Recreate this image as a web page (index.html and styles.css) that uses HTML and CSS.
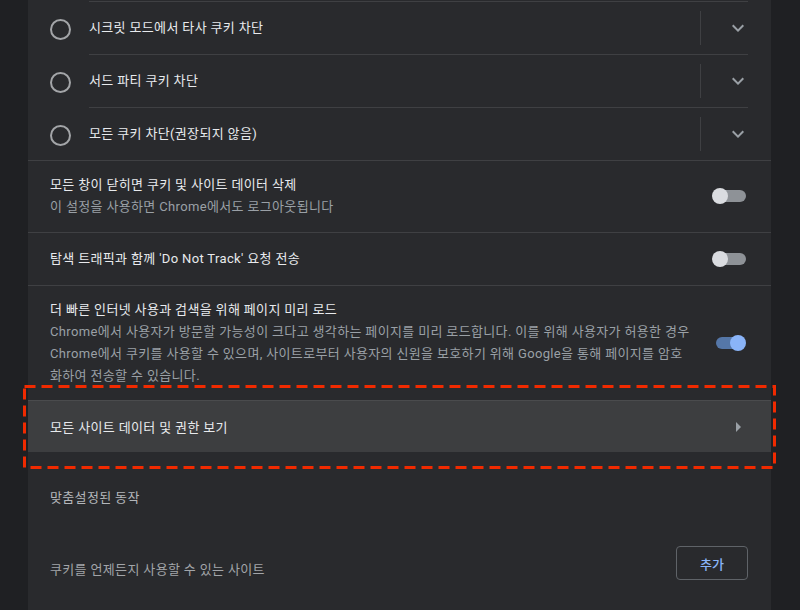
FILE: index.html
```html
<!DOCTYPE html>
<html lang="ko">
<head>
<meta charset="utf-8">
<title>쿠키 설정</title>
<link rel="stylesheet" href="styles.css">
</head>
<body>
<main class="card">
  <div class="radio-list">
    <div class="radio-row">
      <span class="radio"></span>
      <div class="radio-body">
        <span class="label">시크릿 모드에서 타사 쿠키 차단</span>
        <span class="vsep"></span>
        <svg class="icon" viewBox="0 0 24 24"><path d="M16.59 8.59L12 13.17 7.41 8.59 6 10l6 6 6-6z"/></svg>
      </div>
    </div>
    <div class="radio-row">
      <span class="radio"></span>
      <div class="radio-body">
        <span class="label">서드 파티 쿠키 차단</span>
        <span class="vsep"></span>
        <svg class="icon" viewBox="0 0 24 24"><path d="M16.59 8.59L12 13.17 7.41 8.59 6 10l6 6 6-6z"/></svg>
      </div>
    </div>
    <div class="radio-row">
      <span class="radio"></span>
      <div class="radio-body">
        <span class="label">모든 쿠키 차단(권장되지 않음)</span>
        <span class="vsep"></span>
        <svg class="icon" viewBox="0 0 24 24"><path d="M16.59 8.59L12 13.17 7.41 8.59 6 10l6 6 6-6z"/></svg>
      </div>
    </div>
  </div>

  <div class="toggle-row two-line">
    <div class="text">
      <div class="label">모든 창이 닫히면 쿠키 및 사이트 데이터 삭제</div>
      <div class="sub">이 설정을 사용하면 Chrome에서도 로그아웃됩니다</div>
    </div>
    <span class="toggle"><span class="knob"></span></span>
  </div>

  <div class="toggle-row one-line">
    <div class="text">
      <div class="label">탐색 트래픽과 함께 'Do Not Track' 요청 전송</div>
    </div>
    <span class="toggle"><span class="knob"></span></span>
  </div>

  <div class="toggle-row multi-line">
    <div class="text">
      <div class="label">더 빠른 인터넷 사용과 검색을 위해 페이지 미리 로드</div>
      <div class="sub">Chrome에서 사용자가 방문할 가능성이 크다고 생각하는 페이지를 미리 로드합니다. 이를 위해 사용자가 허용한 경우 Chrome에서 쿠키를 사용할 수 있으며, 사이트로부터 사용자의 신원을 보호하기 위해 Google을 통해 페이지를 암호화하여 전송할 수 있습니다.</div>
    </div>
    <span class="toggle on"><span class="knob"></span></span>
  </div>

  <div class="link-row">
    <span class="label">모든 사이트 데이터 및 권한 보기</span>
    <svg class="icon" viewBox="0 0 24 24"><path d="M10 17l5-5-5-5v10z"/></svg>
  </div>

  <h2 class="section-title">맞춤설정된 동작</h2>

  <div class="list-header">
    <span class="sub-title">쿠키를 언제든지 사용할 수 있는 사이트</span>
    <button class="add-btn" type="button">추가</button>
  </div>
</main>

<svg class="highlight" viewBox="0 0 753 84" aria-hidden="true">
  <rect x="1.5" y="1.5" width="750" height="81" fill="none" stroke="#f02a00" stroke-width="3" stroke-dasharray="11 6"/>
</svg>
</body>
</html>
```

FILE: styles.css
```css
* { box-sizing: border-box; }

html, body {
  margin: 0;
  padding: 0;
  background: #1f2023;
  height: 100%;
  overflow: hidden;
}

body {
  font-family: Roboto, "Noto Sans CJK KR", sans-serif;
  font-size: 13px;
  letter-spacing: 0.35px;
  color: #e8eaed;
  position: relative;
}

.card {
  margin-left: 28px;
  width: 743px;
  min-height: 610px;
  background: #292a2d;
  padding-top: 1px;
}

/* radio list */
.radio-list {
  border-bottom: 1px solid #3f4043;
}

.radio-row {
  display: flex;
  align-items: stretch;
}

.radio {
  flex: 0 0 61px;
  position: relative;
}

.radio::before {
  content: "";
  position: absolute;
  left: 22px;
  top: 18px;
  width: 17px;
  height: 17px;
  border: 2px solid #a3a5a8;
  border-radius: 50%;
}

.radio-body {
  flex: 1;
  margin-right: 23px;
  height: 53px;
  border-top: 1px solid #3f4043;
  display: flex;
  align-items: center;
}

.radio-body .label {
  flex: 1;
  line-height: 22px;
}

.vsep {
  width: 1px;
  height: 34px;
  background: #3f4043;
  margin-right: 25px;
}

.icon {
  width: 24px;
  height: 24px;
  fill: #9aa0a6;
  flex: 0 0 24px;
}

.radio-body .icon {
  margin-right: -2px;
}

/* toggle rows */
.toggle-row {
  display: flex;
  align-items: center;
  padding: 0 25px 0 22px;
  border-bottom: 1px solid #3f4043;
}

.toggle-row .text {
  flex: 1;
  line-height: 22px;
}

.two-line { padding-top: 13px; padding-bottom: 14px; }
.one-line { padding-top: 15px; padding-bottom: 15px; }
.multi-line { padding-top: 13px; padding-bottom: 13px; border-bottom: none; }

.multi-line .text { padding-right: 20px; }

.sub {
  color: #9aa0a6;
}

.toggle {
  position: relative;
  flex: 0 0 34px;
  height: 16px;
}

.toggle::before {
  content: "";
  position: absolute;
  left: 4px;
  right: 0;
  top: 2px;
  height: 12px;
  border-radius: 6px;
  background: #8e9297;
}

.knob {
  position: absolute;
  left: 0;
  top: 0;
  width: 16px;
  height: 16px;
  border-radius: 50%;
  background: #dadce0;
}

.toggle.on::before {
  left: 4px;
  right: 2px;
  background: #5577a8;
}

.toggle.on .knob {
  left: 18px;
  background: #8ab4f8;
}

/* link row */
.link-row {
  display: flex;
  align-items: center;
  height: 52px;
  padding: 0 21px 0 22px;
  background: #3d3e40;
  border-top: 1px solid #4a4b4d;
}

.link-row .label {
  flex: 1;
}

/* section */
.section-title {
  margin: 0;
  padding: 35px 22px 0;
  font-size: 13px;
  font-weight: normal;
  line-height: 22px;
  color: #b4b7bb;
}

.list-header {
  display: flex;
  align-items: center;
  justify-content: space-between;
  padding: 37px 23px 0 22px;
}

.sub-title {
  color: #a2a5a9;
  margin-top: 10px;
}

.add-btn {
  width: 72px;
  height: 34px;
  background: transparent;
  border: 1px solid #5f6368;
  border-radius: 4px;
  color: #8ab4f8;
  font-family: Roboto, "Noto Sans CJK KR", sans-serif;
  font-size: 13px;
  font-weight: 500;
}

/* annotation overlay */
.highlight {
  position: absolute;
  left: 23px;
  top: 385px;
  width: 753px;
  height: 84px;
}
```
